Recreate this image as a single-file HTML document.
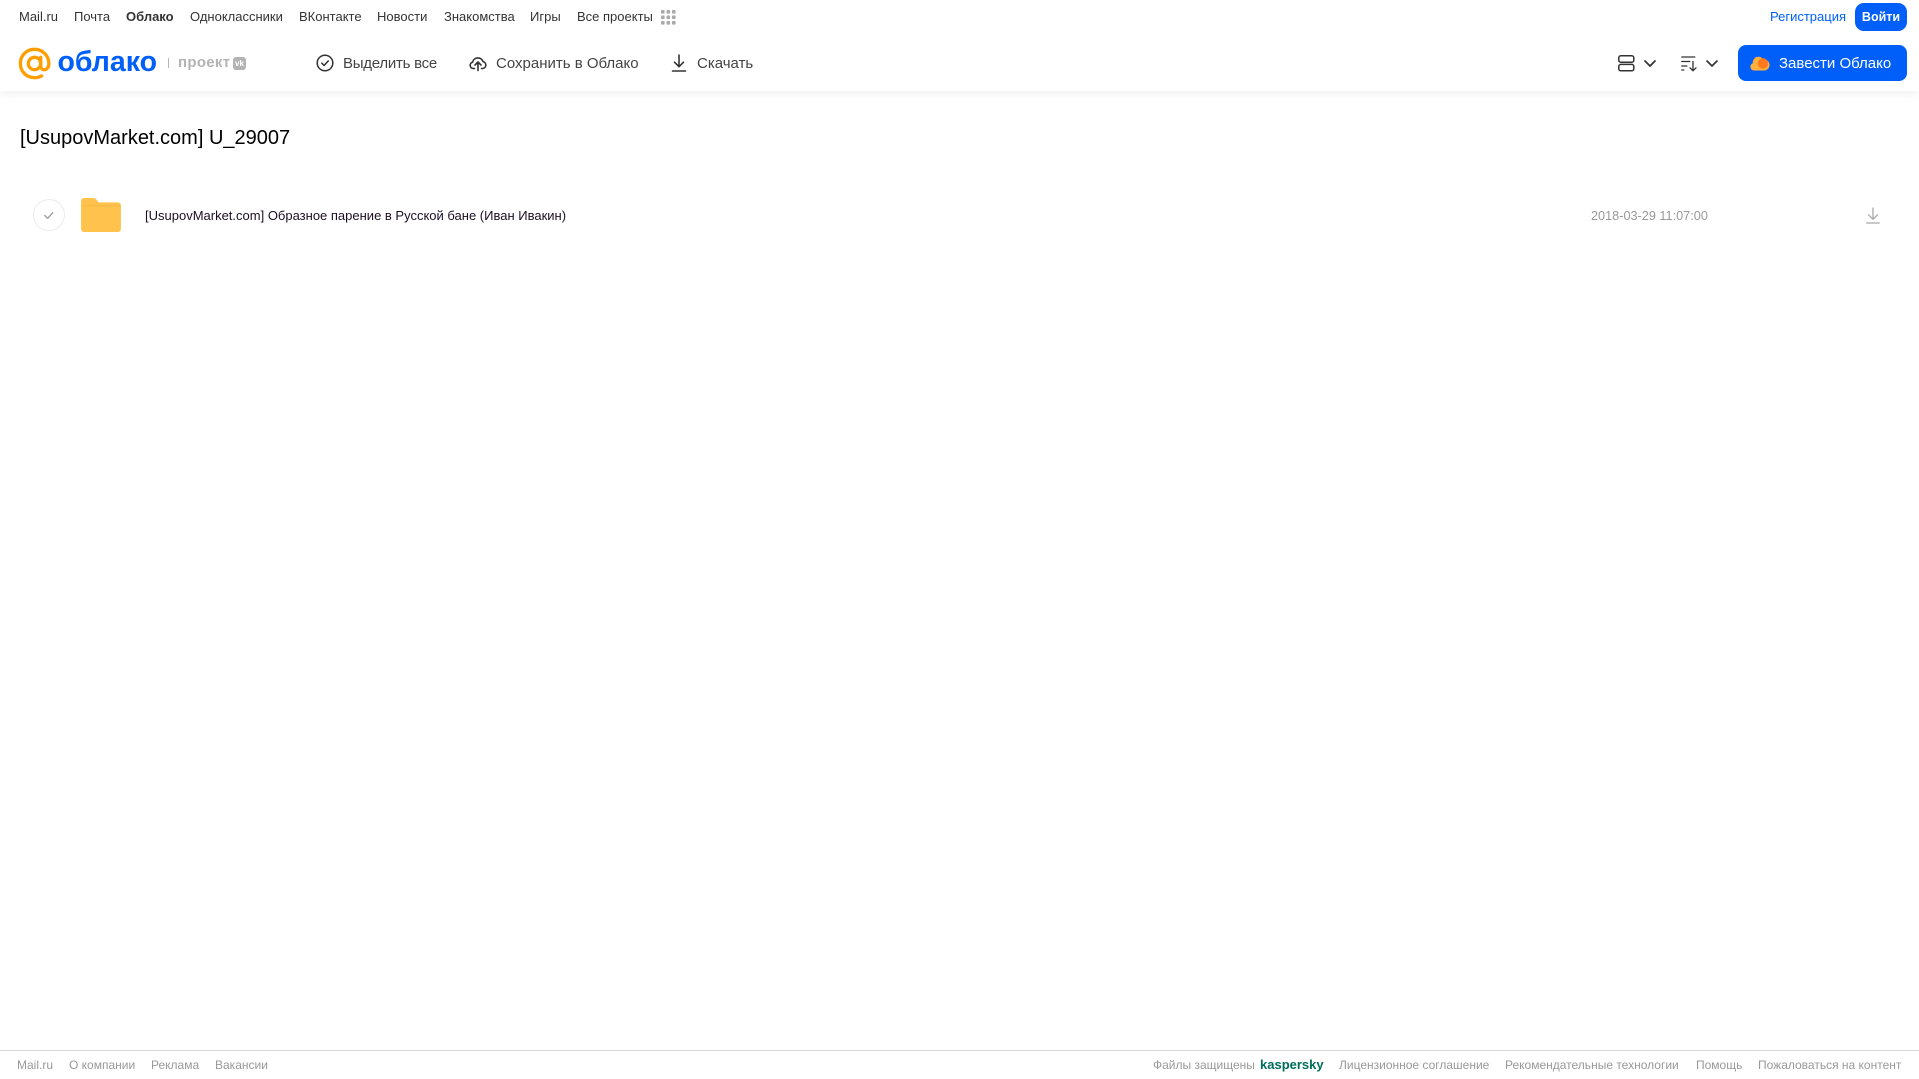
<!DOCTYPE html>
<html lang="ru">
<head>
<meta charset="utf-8">
<title>Облако</title>
<style>
html,body{margin:0;padding:0;background:#fff;}
body{width:1919px;height:1079px;position:relative;overflow:hidden;font-family:"Liberation Sans","DejaVu Sans",sans-serif;color:#333;}
.t{position:absolute;white-space:nowrap;line-height:20px;height:20px;}
.n{font-size:13px;top:7px;color:#333;}
.b{font-size:15px;top:54px;color:#444;}
.f{font-size:12px;top:1055px;color:#999;}
svg{position:absolute;overflow:visible;}
#hd{position:absolute;left:0;top:0;width:1919px;height:91px;background:#fff;box-shadow:0 2px 10px rgba(0,0,0,.07);}
#ft{position:absolute;left:0;top:1050px;width:1919px;height:29px;border-top:1px solid #d8d8d8;box-sizing:border-box;}
</style>
</head>
<body>
<div id="hd"></div>

<span class="t n" style="left:19px">Mail.ru</span>
<span class="t n" style="left:74px">Почта</span>
<span class="t n" style="left:126px;font-weight:bold">Облако</span>
<span class="t n" style="left:190px">Одноклассники</span>
<span class="t n" style="left:299px">ВКонтакте</span>
<span class="t n" style="left:377px">Новости</span>
<span class="t n" style="left:444px">Знакомства</span>
<span class="t n" style="left:530px">Игры</span>
<span class="t n" style="left:577px">Все проекты</span>
<svg style="left:661px;top:10px" width="15" height="15" viewBox="0 0 15 15" fill="#aaa">
<rect x="0" y="0" width="3.6" height="3.6" rx=".8"/><rect x="5.5" y="0" width="3.6" height="3.6" rx=".8"/><rect x="11" y="0" width="3.6" height="3.6" rx=".8"/>
<rect x="0" y="5.5" width="3.6" height="3.6" rx=".8"/><rect x="5.5" y="5.5" width="3.6" height="3.6" rx=".8"/><rect x="11" y="5.5" width="3.6" height="3.6" rx=".8"/>
<rect x="0" y="11" width="3.6" height="3.6" rx=".8"/><rect x="5.5" y="11" width="3.6" height="3.6" rx=".8"/><rect x="11" y="11" width="3.6" height="3.6" rx=".8"/>
</svg>

<span class="t n" style="left:1770px;color:#005ff9">Регистрация</span>
<div style="position:absolute;left:1855px;top:3px;width:52px;height:28px;background:#005ff9;border-radius:9px;color:#fff;font-size:12.5px;line-height:28px;text-align:center;font-weight:bold">Войти</div>

<!-- logo -->
<svg style="left:18px;top:46.500px" width="33" height="33" viewBox="0 0 34 34" fill="none">
<path d="M17 10.6a6.4 6.4 0 1 0 0 12.8a6.4 6.4 0 1 0 0-12.8z" stroke="#ff9e00" stroke-width="3.4"/>
<path d="M23.4 10.6v8.6c0 2.8 1.6 4.2 3.6 4.2c2.8 0 4.8-2.6 4.8-6.4C31.800 8.800 25.200 2.400 17 2.400C8.800 2.400 2.400 8.800 2.400 17C2.400 25.200 8.800 31.600 17 31.600c2.800 0 5.200-.6 7.400-1.800" stroke="#ff9e00" stroke-width="3.400" stroke-linecap="round"/>
</svg>
<span class="t" style="left:57.500px;top:44px;line-height:36px;height:36px;font-size:28.500px;font-weight:bold;color:#005ff9">облако</span>
<div style="position:absolute;left:168px;top:58px;width:1px;height:10px;background:#b5b5b5"></div>
<span class="t" style="left:178px;top:53px;font-size:15px;font-weight:bold;color:#b3b3b3;letter-spacing:.3px">проект</span>
<div style="position:absolute;left:233px;top:57px;width:13px;height:13px;background:#b3b3b3;border-radius:3px;color:#fff;font-size:8px;line-height:13px;text-align:center;font-weight:bold">vk</div>

<!-- toolbar -->
<svg style="left:316px;top:54px" width="18" height="18" viewBox="0 0 18 18" fill="none" stroke="#333" stroke-width="1.500" stroke-linecap="round" stroke-linejoin="round">
<circle cx="9" cy="9" r="7.800"/><path d="M5.800 9.200l2.300 2.300l4.200-4.600"/>
</svg>
<span class="t b" style="left:343px;letter-spacing:-.25px">Выделить все</span>

<svg style="left:469px;top:54px" width="18" height="18" viewBox="0 0 18 18" fill="none" stroke="#333" stroke-width="1.600" stroke-linecap="round" stroke-linejoin="round">
<path d="M5.500 14.500H4.200A3.200 3.200 0 0 1 3.600 8.200A5.400 5.400 0 0 1 14 7.600A3.500 3.500 0 0 1 13.800 14.500H12.500"/>
<path d="M9 16.500V8.500M6 11l3-3l3 3"/>
</svg>
<span class="t b" style="left:496px">Сохранить в Облако</span>

<svg style="left:670px;top:54px" width="18" height="18" viewBox="0 0 18 18" fill="none" stroke="#333" stroke-width="1.600" stroke-linecap="round" stroke-linejoin="round">
<path d="M9 1v11.500M4.500 8.200L9 12.700l4.500-4.500M2.500 17h13"/>
</svg>
<span class="t b" style="left:697px">Скачать</span>

<!-- right controls -->
<svg style="left:1618px;top:55px" width="17" height="17" viewBox="0 0 17 17" fill="none" stroke="#333" stroke-width="1.500">
<rect x=".8" y=".8" width="15" height="6.400" rx="2"/><rect x=".8" y="9.400" width="15" height="6.400" rx="2"/>
</svg>
<svg style="left:1644px;top:60px" width="12" height="7" viewBox="0 0 12 7" fill="none" stroke="#333" stroke-width="1.700" stroke-linecap="round" stroke-linejoin="round"><path d="M1 1l5 5l5-5"/></svg>
<svg style="left:1681px;top:55px" width="17" height="17" viewBox="0 0 17 17" fill="none" stroke="#333" stroke-width="1.300" stroke-linecap="round" stroke-linejoin="round">
<path d="M.8 2h13M.8 6.500h8M.8 11h5M.8 15h2M12 6.500V15.500M9 12.800l3 3l3-3"/>
</svg>
<svg style="left:1706px;top:60px" width="12" height="7" viewBox="0 0 12 7" fill="none" stroke="#333" stroke-width="1.700" stroke-linecap="round" stroke-linejoin="round"><path d="M1 1l5 5l5-5"/></svg>

<div style="position:absolute;left:1738px;top:45px;width:169px;height:36px;background:#005ff9;border-radius:8px"></div>
<svg style="left:1750px;top:54px" width="20" height="17" viewBox="0 0 20 17">
<path d="M4 16.500A3.800 3.800 0 0 1 2.800 9.200A5.800 5.800 0 0 1 13.500 5.500A5.500 5.500 0 0 1 14.500 16.500z" fill="#ffb03a"/>
<circle cx="13" cy="9.500" r="5.200" fill="#ff7a1f"/>
</svg>
<span class="t" style="left:1779px;top:54px;font-size:15px;color:#fff">Завести Облако</span>

<!-- title -->
<span class="t" style="left:20px;top:125px;line-height:26px;height:26px;font-size:20px;color:#000">[UsupovMarket.com] U_29007</span>

<!-- row -->
<svg style="left:32px;top:199px" width="34" height="34" viewBox="0 0 34 34" fill="none">
<circle cx="17" cy="16" r="15.500" stroke="#ececec" stroke-width="1"/>
<path d="M12.800 16.500l2.800 2.800l5.200-5.600" stroke="#999" stroke-width="1.300" stroke-linecap="round" stroke-linejoin="round"/>
</svg>
<svg style="left:81px;top:198px" width="40" height="34" viewBox="0 0 41 35">
<path d="M0 3a3 3 0 0 1 3-3h9.500c1.500 0 2.600.6 3.400 1.800l2 2.700H38a3 3 0 0 1 3 3V32a3 3 0 0 1-3 3H3a3 3 0 0 1-3-3z" fill="#ffc34d"/>
<path d="M0 8h41" stroke="#f5b73f" stroke-width="1"/>
</svg>
<span class="t" style="left:145px;top:206px;font-size:13px;color:#1a1024">[UsupovMarket.com] Образное парение в Русской бане (Иван Ивакин)</span>
<span class="t" style="left:1591px;top:205.500px;font-size:12.700px;color:#999">2018-03-29 11:07:00</span>
<svg style="left:1866px;top:207px" width="14" height="17" viewBox="0 0 14 17" fill="none" stroke="#a8a8a8" stroke-width="1.300" stroke-linecap="round" stroke-linejoin="round">
<path d="M7 1v11M2.500 7.800L7 12.300l4.500-4.500M.8 16h12.400"/>
</svg>

<!-- footer -->
<div id="ft"></div>
<span class="t f" style="left:17px">Mail.ru</span>
<span class="t f" style="left:69px">О компании</span>
<span class="t f" style="left:151px">Реклама</span>
<span class="t f" style="left:215px">Вакансии</span>
<span class="t f" style="left:1153px">Файлы защищены</span>
<span class="t f" style="left:1260px;font-size:13px;font-weight:bold;color:#006d5c">kaspersky</span>
<span class="t f" style="left:1339px">Лицензионное соглашение</span>
<span class="t f" style="left:1505px">Рекомендательные технологии</span>
<span class="t f" style="left:1696px">Помощь</span>
<span class="t f" style="left:1758px">Пожаловаться на контент</span>
</body>
</html>
